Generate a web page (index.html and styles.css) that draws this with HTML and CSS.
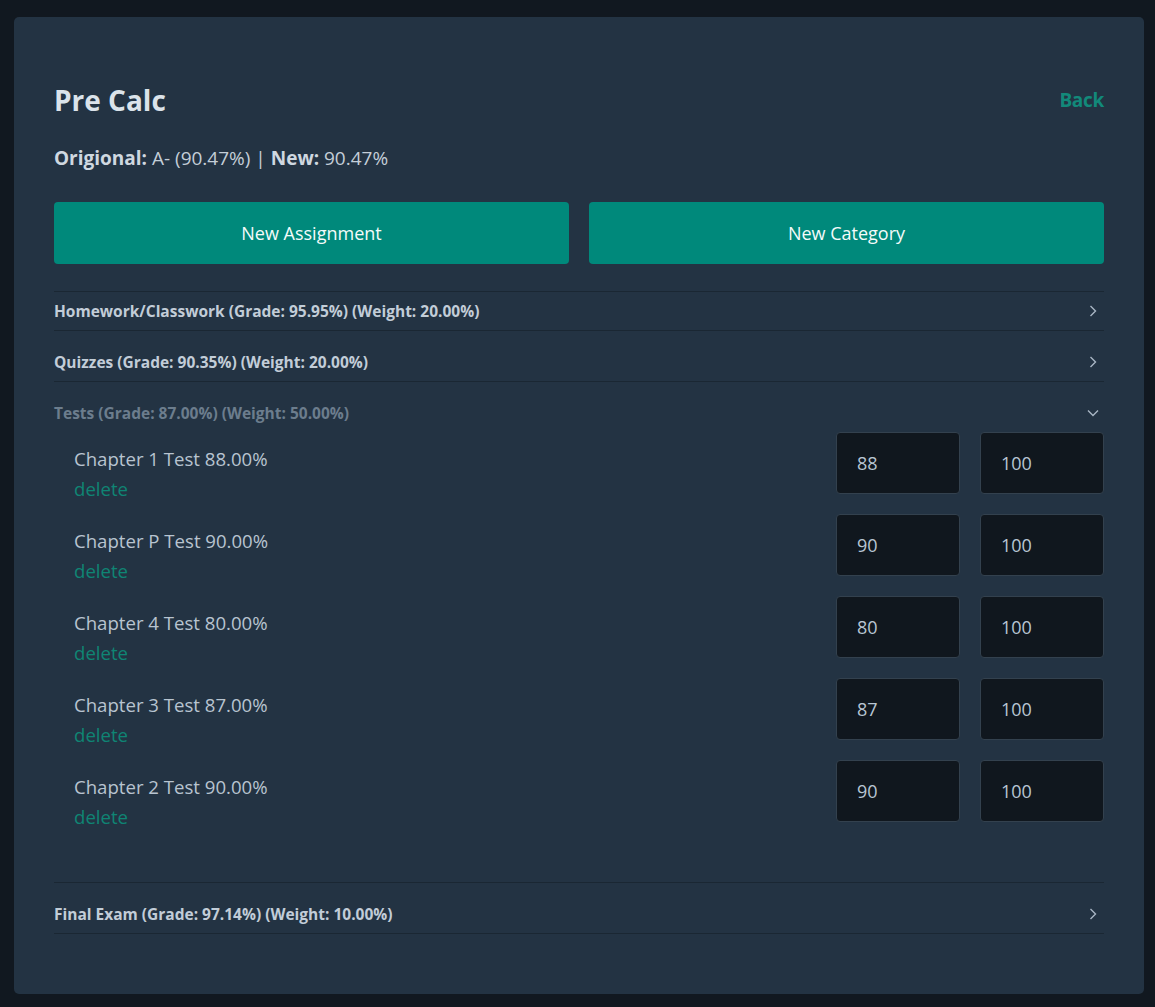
FILE: index.html
```html
<!DOCTYPE html>
<html lang="en">
<head>
<meta charset="utf-8">
<title>Pre Calc</title>
<link rel="stylesheet" href="styles.css">
</head>
<body>
<div class="card">
  <div class="header">
    <h1 class="title">Pre Calc</h1>
    <a class="back" href="#">Back</a>
  </div>
  <p class="summary"><b>Origional:</b> A- (90.47%) | <b>New:</b> 90.47%</p>
  <div class="actions">
    <button class="btn">New Assignment</button>
    <button class="btn">New Category</button>
  </div>
  <div class="cats">
    <div class="cat">
      <div class="cat-head">
        <span>Homework/Classwork (Grade: 95.95%) (Weight: 20.00%)</span>
        <svg class="chev" width="12" height="12" viewBox="0 0 12 12"><path d="M3.5 1 L8.5 6 L3.5 11" fill="none" stroke="currentColor" stroke-width="1.4"/></svg>
      </div>
    </div>
    <div class="cat">
      <div class="cat-head">
        <span>Quizzes (Grade: 90.35%) (Weight: 20.00%)</span>
        <svg class="chev" width="12" height="12" viewBox="0 0 12 12"><path d="M3.5 1 L8.5 6 L3.5 11" fill="none" stroke="currentColor" stroke-width="1.4"/></svg>
      </div>
    </div>
    <div class="cat open">
      <div class="cat-head">
        <span>Tests (Grade: 87.00%) (Weight: 50.00%)</span>
        <svg class="chev" width="12" height="12" viewBox="0 0 12 12"><path d="M1 3.5 L6 8.5 L11 3.5" fill="none" stroke="currentColor" stroke-width="1.4"/></svg>
      </div>
      <div class="cat-body">
        <div class="item">
          <div class="item-info"><div class="item-name">Chapter 1 Test 88.00%</div><a class="del" href="#">delete</a></div>
          <div class="item-inputs"><input class="score" value="88"><input class="score" value="100"></div>
        </div>
        <div class="item">
          <div class="item-info"><div class="item-name">Chapter P Test 90.00%</div><a class="del" href="#">delete</a></div>
          <div class="item-inputs"><input class="score" value="90"><input class="score" value="100"></div>
        </div>
        <div class="item">
          <div class="item-info"><div class="item-name">Chapter 4 Test 80.00%</div><a class="del" href="#">delete</a></div>
          <div class="item-inputs"><input class="score" value="80"><input class="score" value="100"></div>
        </div>
        <div class="item">
          <div class="item-info"><div class="item-name">Chapter 3 Test 87.00%</div><a class="del" href="#">delete</a></div>
          <div class="item-inputs"><input class="score" value="87"><input class="score" value="100"></div>
        </div>
        <div class="item">
          <div class="item-info"><div class="item-name">Chapter 2 Test 90.00%</div><a class="del" href="#">delete</a></div>
          <div class="item-inputs"><input class="score" value="90"><input class="score" value="100"></div>
        </div>
      </div>
    </div>
    <div class="cat last">
      <div class="cat-head">
        <span>Final Exam (Grade: 97.14%) (Weight: 10.00%)</span>
        <svg class="chev" width="12" height="12" viewBox="0 0 12 12"><path d="M3.5 1 L8.5 6 L3.5 11" fill="none" stroke="currentColor" stroke-width="1.4"/></svg>
      </div>
    </div>
  </div>
</div>
</body>
</html>
```
FILE: styles.css
```css
html, body {
  margin: 0;
  padding: 0;
}
body {
  background: #111820;
  padding: 17px 11px 13px 14px;
  font-family: "Open Sans", "Noto Sans", sans-serif;
  color: #c8d3dd;
}
.card {
  background: #233343;
  border-radius: 5px;
  padding: 63px 40px 60px;
  min-height: 854px;
}
.header {
  display: flex;
  justify-content: space-between;
  align-items: center;
  height: 40px;
}
.title {
  margin: 0;
  font-size: 28px;
  font-weight: 700;
  color: #dbe3ea;
  line-height: 40px;
}
.back {
  color: #12897a;
  font-weight: 700;
  font-size: 19px;
  text-decoration: none;
  letter-spacing: -0.3px;
}
.summary {
  margin: 24px 0 0;
  font-size: 19px;
  line-height: 28px;
  color: #c3ced8;
}
.summary b {
  font-weight: 700;
  color: #cfd8e0;
}
.actions {
  display: flex;
  gap: 20px;
  margin-top: 30px;
}
.btn {
  flex: 1;
  height: 62px;
  border: none;
  border-radius: 4px;
  background: #00897b;
  color: #f4fbfa;
  font-family: inherit;
  font-size: 18px;
}
.cats {
  margin-top: 27px;
}
.cat {
  border-top: 1px solid #1a2733;
  padding-top: 12px;
}
.cat:first-child {
  padding-top: 0;
}
.cat.last {
  border-bottom: 1px solid #1a2733;
}
.cat-head {
  display: flex;
  justify-content: space-between;
  align-items: center;
  height: 38px;
  font-size: 15.5px;
  font-weight: 700;
  color: #c2cdd8;
}
.cat.open .cat-head {
  color: #6c7d8d;
}
.chev {
  color: #a8b6c4;
  margin-right: 5px;
}
.cat-body {
  padding-bottom: 40px;
}
.item {
  display: flex;
  justify-content: space-between;
  align-items: flex-start;
  height: 62px;
  padding-left: 20px;
  margin-bottom: 20px;
}
.item-info {
  padding-top: 12px;
  font-size: 18.6px;
  line-height: 30px;
}
.item-name {
  color: #b8c4d0;
}
.del {
  color: #0f8574;
  text-decoration: none;
}
.item-inputs {
  display: flex;
  gap: 20px;
}
.score {
  box-sizing: border-box;
  width: 124px;
  height: 62px;
  background: #10171e;
  border: 1px solid #33414e;
  border-radius: 4px;
  padding: 0 20px;
  color: #b8c6d3;
  font-family: inherit;
  font-size: 18px;
}
```
